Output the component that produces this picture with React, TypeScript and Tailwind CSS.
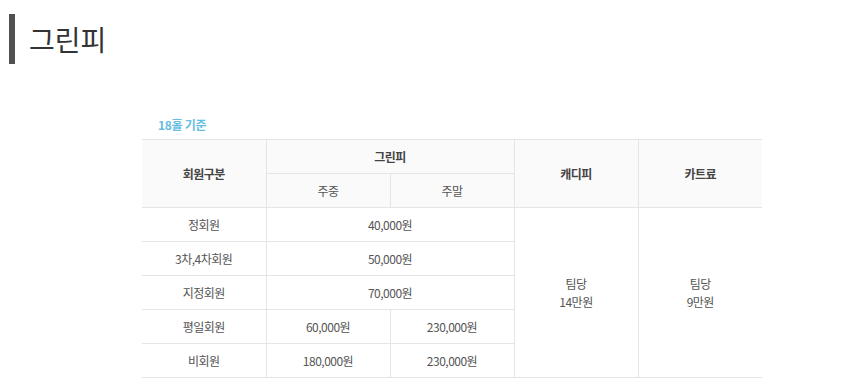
const font = { fontFamily: '"Noto Sans CJK KR", "Noto Sans", sans-serif' };

const rows = [
  { name: "정회원", weekday: "40,000원", weekend: null },
  { name: "3차,4차회원", weekday: "50,000원", weekend: null },
  { name: "지정회원", weekday: "70,000원", weekend: null },
  { name: "평일회원", weekday: "60,000원", weekend: "230,000원" },
  { name: "비회원", weekday: "180,000원", weekend: "230,000원" },
];

const th = "border border-[#e5e5e5] bg-[#fafafa] font-bold text-[#444] h-[34px] p-0";
const td = "border border-[#e5e5e5] text-[#555] h-[34px] p-0";

export default function App() {
  return (
    <div className="w-[860px] h-[392px] bg-white overflow-hidden" style={font}>
      <div className="pt-[14px] pl-[9px]">
        <h2 className="flex items-center h-[50px] border-l-[6px] border-[#505050] pl-[14px] text-[28px] font-normal text-[#333] leading-none">
          그린피
        </h2>
      </div>

      <div className="ml-[142px] mt-[53px] w-[620px]">
        <p className="pl-[16px] text-[12px] font-bold text-[#66bde3] leading-[16px] mb-[6px] tracking-[-0.3px]">18홀 기준</p>
        <table className="w-[620px] border-collapse table-fixed text-[12px] text-center tracking-[-0.5px]">
          <colgroup>
            <col className="w-[124px]" />
            <col className="w-[124px]" />
            <col className="w-[124px]" />
            <col className="w-[124px]" />
            <col className="w-[124px]" />
          </colgroup>
          <thead>
            <tr>
              <th rowSpan={2} className={`${th} border-l-0`}>회원구분</th>
              <th colSpan={2} className={th}>그린피</th>
              <th rowSpan={2} className={th}>캐디피</th>
              <th rowSpan={2} className={`${th} border-r-0`}>카트료</th>
            </tr>
            <tr>
              <th className={`${th} font-normal text-[#555]`}>주중</th>
              <th className={`${th} font-normal text-[#555]`}>주말</th>
            </tr>
          </thead>
          <tbody>
            {rows.map((r, i) => (
              <tr key={r.name}>
                <td className={`${td} border-l-0`}>{r.name}</td>
                {r.weekend ? (
                  <>
                    <td className={td}>{r.weekday}</td>
                    <td className={td}>{r.weekend}</td>
                  </>
                ) : (
                  <td colSpan={2} className={td}>{r.weekday}</td>
                )}
                {i === 0 && (
                  <>
                    <td rowSpan={5} className={`${td} leading-[18px]`}>
                      팀당
                      <br />
                      14만원
                    </td>
                    <td rowSpan={5} className={`${td} border-r-0 leading-[18px]`}>
                      팀당
                      <br />
                      9만원
                    </td>
                  </>
                )}
              </tr>
            ))}
          </tbody>
        </table>
      </div>
    </div>
  );
}
